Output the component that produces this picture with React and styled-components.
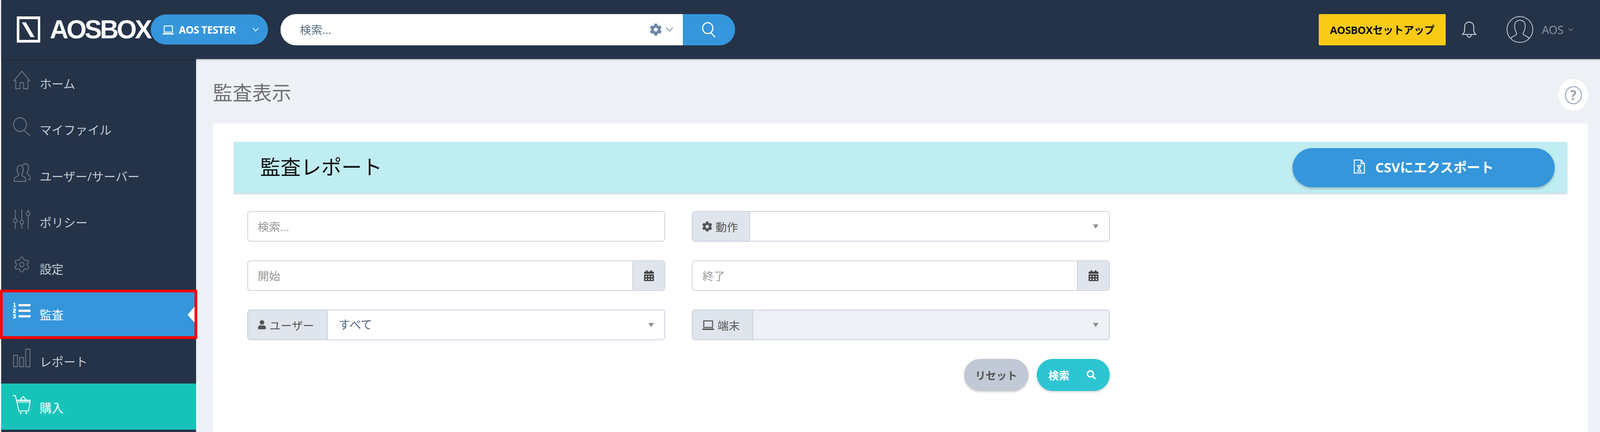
import React from 'react'
import styled, { createGlobalStyle } from 'styled-components'
import { FaCog, FaUser, FaCalendarAlt, FaSearch, FaListOl } from 'react-icons/fa'
import { Settings } from 'lucide-react'

// widths and font sizes follow the window, 4403 is the design width.
// the sandbox window measures 4096 wide although 4403 is asked for, so fixed px get cut off
const u = n => `${(n / 44.03).toFixed(4)}vw`

const GlobalStyle = createGlobalStyle`
  html, body {
    margin: 0;
    padding: 0;
    height: 1105px;
    overflow: hidden;
    background: #fff;
  }
  * { box-sizing: border-box; }
  body, input {
    font-family: 'Open Sans', 'Noto Sans CJK JP', sans-serif;
  }
`

const Page = styled.div`
  width: 100vw;
  height: 1105px;
  padding-left: ${u(3)};
  overflow: hidden;
  display: flex;
  flex-direction: column;
`

const TopBar = styled.header`
  position: relative;
  z-index: 2;
  flex: 0 0 151px;
  display: flex;
  align-items: center;
  padding-left: ${u(43)};
  padding-right: ${u(70)};
  background: #253349;
  box-shadow: 0 2px 5px rgba(0, 0, 0, 0.25);
`

const Brand = styled.div`
  display: flex;
  align-items: center;
  gap: ${u(26)};
  width: ${u(369)};
`

const BrandName = styled.span`
  font-family: 'Liberation Sans', sans-serif;
  font-size: ${u(71)};
  font-weight: 700;
  letter-spacing: ${u(-5.2)};
  color: #fff;
  line-height: 1;
`

const TenantPill = styled.button`
  width: ${u(322)};
  height: 77px;
  border: 0;
  border-radius: 39px;
  background: #3596db;
  color: #fff;
  display: flex;
  align-items: center;
  padding: 0 ${u(25)} 0 ${u(32)};
  font-family: 'Open Sans', sans-serif;
  font-weight: 700;
  font-size: ${u(28)};
  letter-spacing: ${u(-0.5)};
  gap: ${u(13)};
  svg:last-child { margin-left: auto; }
`

const SearchBar = styled.div`
  margin-left: ${u(35)};
  width: ${u(1251)};
  height: 80px;
  display: flex;
  border-radius: 40px;
  overflow: hidden;
`

const SearchField = styled.div`
  flex: 1;
  background: #fff;
  display: flex;
  align-items: center;
  padding: 0 ${u(25)} 0 ${u(53)};
  gap: ${u(9)};
  input {
    flex: 1;
    border: 0;
    outline: 0;
    font-size: ${u(31)};
    background: none;
    padding: 0;
  }
  input::placeholder { color: #5b7088; opacity: 1; }
`

const SearchButton = styled.button`
  width: ${u(144)};
  border: 0;
  background: #3596db;
  padding: 0;
  display: flex;
  align-items: center;
  justify-content: center;
`

const SetupButton = styled.button`
  margin-left: auto;
  width: ${u(349)};
  height: 80px;
  border: 0;
  border-radius: 3px;
  background: #f9cb14;
  color: #111;
  font-family: 'Open Sans', 'Noto Sans CJK JP', sans-serif;
  font-weight: 700;
  font-size: ${u(29)};
  letter-spacing: ${u(-0.6)};
  padding: 0;
`

const Bell = styled.span`
  margin-left: ${u(44)};
  display: flex;
`

const Account = styled.div`
  margin-left: ${u(83)};
  display: flex;
  align-items: center;
  gap: ${u(24)};
  color: #8d98a8;
  font-size: ${u(31)};
  width: ${u(187)};
  span { letter-spacing: ${u(-0.6)}; }
`

const AccountName = styled.div`
  display: flex;
  align-items: center;
  gap: ${u(14)};
`

const Body = styled.div`
  flex: 1;
  display: flex;
  min-height: 0;
`

const Sidebar = styled.nav`
  position: relative;
  z-index: 1;
  flex: 0 0 ${u(537)};
  background: #253349;
`

const NavItem = styled.a`
  position: relative;
  height: 118.5px;
  display: flex;
  align-items: center;
  padding-left: ${u(32)};
  gap: ${u(25)};
  font-size: ${u(33)};
  color: ${p => (p.$active || p.$buy ? '#fff' : '#c3cad4')};
  background: ${p => (p.$active ? '#3596db' : p.$buy ? '#17c3b9' : 'transparent')};
  border-bottom: ${p => (p.$active ? '2px solid #2b7fbe' : '0')};
`

const NavIcon = styled.span`
  flex: 0 0 ${u(49)};
  height: 49px;
  margin-bottom: 11px;
  display: flex;
  color: ${p => (p.$light ? '#fff' : '#6b7787')};
`

const NavLabel = styled.span`
  margin-top: 4px;
`

const ActiveNotch = styled.span`
  position: absolute;
  right: 0;
  top: 36px;
  width: 0;
  height: 0;
  border-top: 25px solid transparent;
  border-bottom: 25px solid transparent;
  border-right: ${u(24)} solid #fff;
`

const Highlight = styled.span`
  position: absolute;
  left: ${u(-3)};
  right: ${u(-3)};
  top: -3px;
  bottom: -7px;
  border: 7px solid #fe0000;
  pointer-events: none;
`

const Main = styled.main`
  flex: 1;
  min-width: 0;
  display: flex;
  flex-direction: column;
  background: #edf0f5;
  padding: 0 ${u(33)} 0 ${u(46)};
`

const TitleRow = styled.div`
  flex: 0 0 165px;
  padding-top: 50px;
  display: flex;
  justify-content: space-between;
  align-items: flex-start;
`

const PageTitle = styled.h1`
  margin: 0;
  font-size: ${u(54)};
  font-weight: 400;
  line-height: 72px;
  color: #707070;
`

const HelpButton = styled.span`
  margin-top: 1px;
  width: ${u(81)};
  height: 82px;
  border-radius: 50%;
  background: #fff;
  display: flex;
  align-items: center;
  justify-content: center;
`

const HelpRing = styled.span`
  width: ${u(47)};
  height: 47px;
  border: 3px solid #a5b1c5;
  border-radius: 50%;
  display: flex;
  align-items: center;
  justify-content: center;
  font-size: ${u(36)};
  font-weight: 600;
  color: #8c8f96;
`

const Card = styled.section`
  flex: 1;
  background: #fff;
  border-radius: 3px 3px 0 0;
  padding: 47px ${u(57)} 0 ${u(58)};
`

const Banner = styled.div`
  height: 131px;
  display: flex;
  align-items: center;
  justify-content: space-between;
  padding: 0 ${u(35)} 0 ${u(72)};
  background: #bfedf2;
  box-shadow: 0 2px 3px rgba(0, 0, 0, 0.22);
`

const BannerTitle = styled.h2`
  margin: 0 0 8px;
  font-size: ${u(56)};
  font-weight: 400;
  color: #111;
`

const ExportButton = styled.button`
  width: ${u(721)};
  height: 100px;
  border: 0;
  border-radius: 50px;
  background: #3596db;
  box-shadow: 0 3px 6px rgba(0, 0, 0, 0.25);
  color: #fff;
  display: flex;
  align-items: center;
  justify-content: center;
  gap: ${u(28)};
  font-family: 'Open Sans', 'Noto Sans CJK JP', sans-serif;
  font-weight: 700;
  font-size: ${u(37)};
  padding: 0 0 6px;
`

const FilterGrid = styled.div`
  margin-top: 46px;
  margin-left: ${u(36)};
  display: grid;
  grid-template-columns: ${u(1151)} ${u(1150)};
  column-gap: ${u(73)};
  row-gap: 48px;
`

const Field = styled.div`
  height: 78px;
  display: flex;
  border: 2px solid ${p => (p.$select ? '#c6cfdd' : '#d0d2d5')};
  border-radius: 8px;
  overflow: hidden;
  background: ${p => (p.$disabled ? '#edf0f5' : '#fff')};
`

const FieldInput = styled.input`
  flex: 1;
  min-width: 0;
  border: 0;
  outline: 0;
  padding: 0 0 0 ${u(27)};
  font-size: ${u(31)};
  background: none;
  &::placeholder { color: #989898; opacity: 1; }
`

const Addon = styled.span`
  flex: 0 0 ${p => u(p.$width)};
  display: flex;
  align-items: center;
  justify-content: ${p => (p.$center ? 'center' : 'flex-start')};
  gap: ${u(8)};
  padding-left: ${p => u(p.$center ? 0 : 26)};
  background: #e0e5ed;
  color: #555;
  font-size: ${u(31)};
  ${p => (p.$center ? 'border-left: 2px solid #ccd0d6;' : 'border-right: 2px solid #c6cfdd;')}
`

const SelectValue = styled.span`
  flex: 1;
  display: flex;
  align-items: center;
  padding: 0 ${u(29)} 6px ${u(30)};
  font-size: ${u(32)};
  color: #55677d;
  &::after {
    content: '';
    margin-left: auto;
    margin-top: 6px;
    border-left: ${u(8)} solid transparent;
    border-right: ${u(8)} solid transparent;
    border-top: 11px solid #8b8b8b;
  }
`

const Actions = styled.div`
  grid-column: 2;
  display: flex;
  justify-content: flex-end;
  gap: ${u(23)};
`

const PillButton = styled.button`
  height: 82px;
  width: ${p => u(p.$width)};
  border: 0;
  border-radius: 41px;
  display: flex;
  align-items: center;
  justify-content: ${p => (p.$primary ? 'space-between' : 'center')};
  padding: ${p => (p.$primary ? `0 ${u(38)} 0 ${u(32)}` : '0')};
  font-family: 'Open Sans', 'Noto Sans CJK JP', sans-serif;
  font-weight: 600;
  font-size: ${u(29)};
  color: ${p => (p.$primary ? '#fff' : '#555')};
  background: ${p => (p.$primary ? '#2ec5d3' : '#c2c9d6')};
  box-shadow: 0 3px 5px rgba(0, 0, 0, 0.18);
`

const Line = ({ children, size = 49, box = 50, color = 'currentColor', width = 2.4 }) => (
  <svg width={u(size)} height={size} viewBox={`0 0 ${box} ${box}`} fill="none" stroke={color} strokeWidth={width} preserveAspectRatio="none">
    {children}
  </svg>
)

const HomeIcon = () => (
  <Line>
    <path d="M25 2 3 27h5v21h12V32h10v16h12V27h5z" />
  </Line>
)

const FilesIcon = () => (
  <Line>
    <circle cx="20" cy="20" r="18" />
    <path d="m31 35 17 14" />
  </Line>
)

const UsersIcon = () => (
  <Line>
    <path d="M4 48v-6c0-3 3-5 7-7 4-1 6-2 5-6-3-3-4-7-4-12 0-7 3-11 8-11s9 4 9 11c0 5-2 9-4 12-1 4 1 5 5 6 4 2 6 4 6 7v6z" />
    <path d="M27 7c1-3 4-5 8-5 6 0 9 4 9 11 0 5-2 9-4 12 0 4 1 5 4 6 3 2 5 4 5 7v5h-7" />
  </Line>
)

const SlidersIcon = () => (
  <Line>
    <path d="M7 0v24M7 34v16M25 0v28M25 38v12M43 0v6M43 16v34" />
    <circle cx="7" cy="29" r="5" />
    <circle cx="25" cy="33" r="5" />
    <circle cx="43" cy="11" r="5" />
  </Line>
)

const ReportIcon = () => (
  <Line>
    <rect x="2" y="18" width="11" height="30" />
    <rect x="19" y="24" width="11" height="24" />
    <rect x="36" y="2" width="12" height="46" />
  </Line>
)

const CartIcon = () => (
  <Line color="#fff">
    <path d="M0 2h7l10 40h27l5-28H11" />
    <path d="m21 13 8-9 8 9" />
    <path d="M12 14h37l-1 7H14z" fill="#fff" fillOpacity="0.55" stroke="none" />
    <rect x="19" y="45" width="5" height="5" rx="2" fill="#fff" stroke="none" />
    <rect x="35" y="45" width="5" height="5" rx="2" fill="#fff" stroke="none" />
  </Line>
)

const Chevron = ({ color, width, height, stroke = 2.4 }) => (
  <svg width={u(width)} height={height} viewBox="0 0 20 12" fill="none" stroke={color} strokeWidth={stroke} preserveAspectRatio="none">
    <path d="m2 1 8 9 8-9" />
  </svg>
)

const Laptop = ({ color, size, width }) => (
  <svg width={u(size)} height={size} viewBox="0 0 34 34" fill="none" stroke={color} strokeWidth={width}>
    <rect x="5" y="6" width="24" height="18" />
    <path d="M1 29h32" strokeWidth={width * 1.5} />
  </svg>
)

const LogoMark = () => (
  <svg width={u(65)} height="67" viewBox="0 0 65 67" preserveAspectRatio="none">
    <rect x="3.500" y="3.500" width="58" height="60" fill="none" stroke="#fff" strokeWidth="7" />
    <path d="M14 15h11l24 38H38z" fill="#fff" />
  </svg>
)

const BellIcon = () => (
  <svg width={u(41)} height="46" viewBox="0 0 41 46" fill="none" stroke="#c5cbd4" strokeWidth="2.600">
    <path d="M2 36c4-3 6-6 6-13V15C8 7 13 2 20.500 2S33 7 33 15v8c0 7 2 10 6 13z" />
    <path d="M15 37c0 9 11 9 11 0" />
  </svg>
)

const AvatarIcon = () => (
  <svg width={u(73)} height="75" viewBox="0 0 73 75" fill="none" stroke="#c5cbd4" strokeWidth="2.200">
    <circle cx="36.500" cy="37.500" r="35.500" />
    <path d="M11 62c3-5 8-6 14-9 3-2 3-5 1-9-3-5-4-11-4-17 0-9 6-15 14.500-15S51 18 51 27c0 6-1 12-4 17-2 4-2 7 1 9 6 3 11 4 14 9" />
  </svg>
)

const DocIcon = () => (
  <svg width={u(32)} height="40" viewBox="0 0 32 40" fill="none" stroke="#fff" strokeWidth="2.600">
    <path d="M2 2h19l9 10v26H2z" />
    <path d="M21 2v10h9" />
    <path d="M10 17h12M10 33h12M11 17l10 16M21 17 11 33" />
  </svg>
)

const navItems = [
  { label: 'ホーム', icon: <HomeIcon /> },
  { label: 'マイファイル', icon: <FilesIcon /> },
  { label: 'ユーザー/サーバー', icon: <UsersIcon /> },
  { label: 'ポリシー', icon: <SlidersIcon /> },
  { label: '設定', icon: <Settings size={u(49)} strokeWidth={1.1} /> },
  { label: '監査', icon: <FaListOl size={u(49)} />, active: true },
  { label: 'レポート', icon: <ReportIcon /> },
  { label: '購入', icon: <CartIcon />, buy: true },
]

export default function App() {
  return (
    <Page>
      <GlobalStyle />
      <TopBar>
        <Brand>
          <LogoMark />
          <BrandName>AOSBOX</BrandName>
        </Brand>
        <TenantPill>
          <Laptop color="#fff" size={32} width={2.6} />
          AOS TESTER
          <Chevron color="#fff" width={18} height={10} />
        </TenantPill>
        <SearchBar>
          <SearchField>
            <input placeholder="検索..." />
            <FaCog size={u(34)} color="#6b87a5" />
            <Chevron color="#6b87a5" width={23} height={13} stroke={1.8} />
          </SearchField>
          <SearchButton>
            <Line size={40} box={40} color="#fff" width={3}>
              <circle cx="17" cy="16" r="14" />
              <path d="m26 28 11 11" />
            </Line>
          </SearchButton>
        </SearchBar>
        <SetupButton>AOSBOXセットアップ</SetupButton>
        <Bell>
          <BellIcon />
        </Bell>
        <Account>
          <AvatarIcon />
          <AccountName>
            <span>AOS</span>
            <Chevron color="#8d98a8" width={13} height={8} />
          </AccountName>
        </Account>
      </TopBar>
      <Body>
        <Sidebar>
          {navItems.map(item => (
            <NavItem key={item.label} $active={item.active} $buy={item.buy}>
              <NavIcon $light={item.active || item.buy}>{item.icon}</NavIcon>
              <NavLabel>{item.label}</NavLabel>
              {item.active && <ActiveNotch />}
              {item.active && <Highlight />}
            </NavItem>
          ))}
        </Sidebar>
        <Main>
          <TitleRow>
            <PageTitle>監査表示</PageTitle>
            <HelpButton>
              <HelpRing>?</HelpRing>
            </HelpButton>
          </TitleRow>
          <Card>
            <Banner>
              <BannerTitle>監査レポート</BannerTitle>
              <ExportButton>
                <DocIcon />
                CSVにエクスポート
              </ExportButton>
            </Banner>
            <FilterGrid>
              <Field>
                <FieldInput placeholder="検索..." />
              </Field>
              <Field $select>
                <Addon $width={158}>
                  <FaCog size={u(29)} />
                  動作
                </Addon>
                <SelectValue />
              </Field>
              <Field>
                <FieldInput placeholder="開始" />
                <Addon $width={88} $center>
                  <FaCalendarAlt size={u(31)} color="#444" />
                </Addon>
              </Field>
              <Field>
                <FieldInput placeholder="終了" />
                <Addon $width={88} $center>
                  <FaCalendarAlt size={u(31)} color="#444" />
                </Addon>
              </Field>
              <Field $select>
                <Addon $width={220}>
                  <FaUser size={u(25)} />
                  ユーザー
                </Addon>
                <SelectValue>すべて</SelectValue>
              </Field>
              <Field $select $disabled>
                <Addon $width={166}>
                  <Laptop color="#555" size={34} width={2.8} />
                  端末
                </Addon>
                <SelectValue />
              </Field>
              <Actions>
                <PillButton $width={177}>リセット</PillButton>
                <PillButton $width={201} $primary>
                  検索
                  <FaSearch size={u(25)} />
                </PillButton>
              </Actions>
            </FilterGrid>
          </Card>
        </Main>
      </Body>
    </Page>
  )
}
